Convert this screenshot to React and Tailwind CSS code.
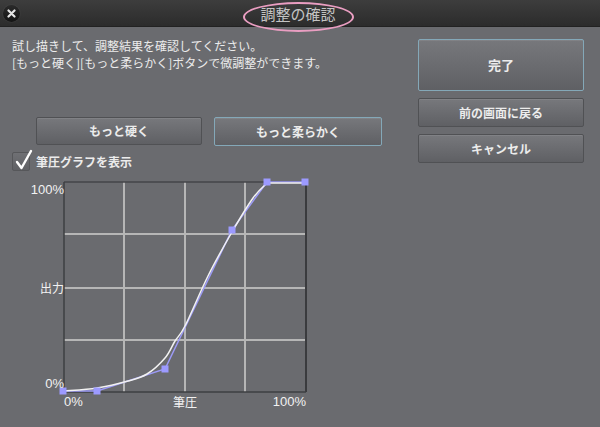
import React from "react";

const FONT = "font-['Noto_Sans_CJK_JP','Noto_Sans',sans-serif]";

function catmull(pts) {
  let d = `M${pts[0][0]},${pts[0][1]}`;
  for (let i = 0; i < pts.length - 1; i++) {
    const p0 = pts[i - 1] || pts[i];
    const p1 = pts[i];
    const p2 = pts[i + 1];
    const p3 = pts[i + 2] || p2;
    const c1x = p1[0] + (p2[0] - p0[0]) / 6;
    const c1y = p1[1] + (p2[1] - p0[1]) / 6;
    const c2x = p2[0] - (p3[0] - p1[0]) / 6;
    const c2y = p2[1] - (p3[1] - p1[1]) / 6;
    d += ` C${c1x.toFixed(1)},${c1y.toFixed(1)} ${c2x.toFixed(1)},${c2y.toFixed(1)} ${p2[0]},${p2[1]}`;
  }
  return d;
}

function Graph() {
  const ctrl = [
    [5, 215],
    [39, 215],
    [107, 193],
    [174, 54],
    [209, 6],
    [247, 6],
  ];
  const curvePts = [
    [6, 215],
    [39, 212],
    [70, 205],
    [89, 198],
    [107, 182],
    [117, 165],
    [127, 150],
    [150, 100],
    [174, 56],
    [195, 22],
    [209, 7],
  ];
  const curve = catmull(curvePts) + " L247,7";
  const vx = [66, 127, 187];
  const hy = [58, 112, 164];
  return (
    <svg width="254" height="222" className="absolute left-[46px] top-0">
      {vx.map((x) => (
        <line key={"v" + x} x1={x} y1={6} x2={x} y2={216} stroke="#b6b6b6" strokeWidth="2" />
      ))}
      {hy.map((y) => (
        <line key={"h" + y} x1={6} y1={y} x2={248} y2={y} stroke="#b6b6b6" strokeWidth="2" />
      ))}
      <line x1="6" y1="6" x2="248" y2="6" stroke="#444548" strokeWidth="1.5" />
      <line x1="6" y1="6" x2="6" y2="216" stroke="#3e3f42" strokeWidth="1.5" />
      <line x1="248" y1="6" x2="248" y2="216" stroke="#3a3b3e" strokeWidth="2" />
      <line x1="6" y1="216" x2="248" y2="216" stroke="#3e3f42" strokeWidth="1.5" />
      <polyline
        points={ctrl.map((p) => p.join(",")).join(" ")}
        fill="none"
        stroke="#9c9af7"
        strokeWidth="1.5"
      />
      <path d={curve} fill="none" stroke="#f2f2f2" strokeWidth="1.5" />
      {ctrl.map((p, i) => (
        <rect key={i} x={p[0] - 3.5} y={p[1] - 3.5} width="7" height="7" fill="#9c9aff" />
      ))}
    </svg>
  );
}

function Btn({ children, className = "", focus = false }) {
  return (
    <div
      className={`flex items-center justify-center rounded-[2px] border bg-gradient-to-b from-[#77787c] to-[#5f6064] text-[12px] font-semibold text-[#ececec] shadow-[inset_0_1px_0_rgba(255,255,255,0.08)] ${
        focus ? "border-[#84a8b8]" : "border-[#505154]"
      } ${className}`}
    >
      {children}
    </div>
  );
}

export default function App() {
  return (
    <div className={`w-[600px] h-[427px] bg-[#6a6b6f] flex flex-col overflow-hidden ${FONT}`}>
      {/* title bar */}
      <div className="relative h-[27px] shrink-0 bg-gradient-to-b from-[#3d3d3d] to-[#2c2c2c] border-b border-[#222] flex items-center justify-center">
        <div className="absolute left-[3px] top-[5px] w-[17px] h-[17px] rounded-full bg-gradient-to-b from-[#2a2a2a] to-[#141414] shadow-[0_0_1px_rgba(255,255,255,0.25)] flex items-center justify-center">
          <svg width="9" height="9" viewBox="0 0 9 9">
            <path d="M1.5 1.5 L7.5 7.5 M7.5 1.5 L1.5 7.5" stroke="#e6e6e6" strokeWidth="2.2" strokeLinecap="round" />
          </svg>
        </div>
        <div className="relative text-[15px] leading-none text-[#c4c4c4] ml-[-4px]">調整の確認</div>
        <div className="absolute left-[243px] top-[2px] w-[111px] h-[30px] rounded-[50%] border-2 border-[#ea9ec2] z-10" />
      </div>

      <div className="flex flex-1">
        {/* left column */}
        <div className="w-[406px] pl-[12px] pt-[10px] flex flex-col">
          <div className="text-[12px] leading-[17px] text-[#ececec]">
            <div>試し描きして、調整結果を確認してください。</div>
            <div>[もっと硬く][もっと柔らかく]ボタンで微調整ができます。</div>
          </div>
          <div className="flex gap-[12px] ml-[24px] mt-[46px]">
            <Btn className="w-[166px] h-[28px]">もっと硬く</Btn>
            <Btn className="w-[168px] h-[29px]" focus>
              もっと柔らかく
            </Btn>
          </div>
          <div className="flex items-center mt-[6px] h-[19px]">
            <div className="relative w-[18px] h-[19px] rounded-[2px] border border-[#56575a] bg-gradient-to-b from-[#6f7074] to-[#606165]">
              <svg width="20" height="24" viewBox="0 0 20 24" className="absolute left-[1px] top-[-6px]">
                <path d="M3 15 L7.5 21 L17 4" fill="none" stroke="#ffffff" strokeWidth="2.4" strokeLinejoin="round" strokeLinecap="round" />
              </svg>
            </div>
            <span className="ml-[6px] text-[12px] font-semibold text-[#ececec]">筆圧グラフを表示</span>
          </div>
          <div className="relative mt-[5px] w-[300px] h-[236px]">
            <Graph />
            <div className="absolute left-0 top-[6px] w-[52px] text-right text-[13px] leading-4 text-[#f2f2f2] font-['Liberation_Sans',sans-serif]">100%</div>
            <div className="absolute left-0 top-[104px] w-[52px] text-right text-[12px] leading-4 text-[#f2f2f2]">出力</div>
            <div className="absolute left-0 top-[200px] w-[52px] text-right text-[13px] leading-4 text-[#f2f2f2] font-['Liberation_Sans',sans-serif]">0%</div>
            <div className="absolute left-[52px] top-[218px] text-[13px] leading-4 text-[#f2f2f2] font-['Liberation_Sans',sans-serif]">0%</div>
            <div className="absolute left-[153px] top-[218px] w-[40px] text-center text-[12px] leading-4 text-[#f2f2f2]">筆圧</div>
            <div className="absolute left-[253px] top-[218px] w-[41px] text-right text-[13px] leading-4 text-[#f2f2f2] font-['Liberation_Sans',sans-serif]">100%</div>
          </div>
        </div>

        {/* right column */}
        <div className="w-[166px] ml-[12px] pt-[12px] flex flex-col gap-[7px]">
          <Btn className="h-[52px] text-[13px]" focus>
            完了
          </Btn>
          <Btn className="h-[29px]">前の画面に戻る</Btn>
          <Btn className="h-[29px]">キャンセル</Btn>
        </div>
      </div>
    </div>
  );
}
